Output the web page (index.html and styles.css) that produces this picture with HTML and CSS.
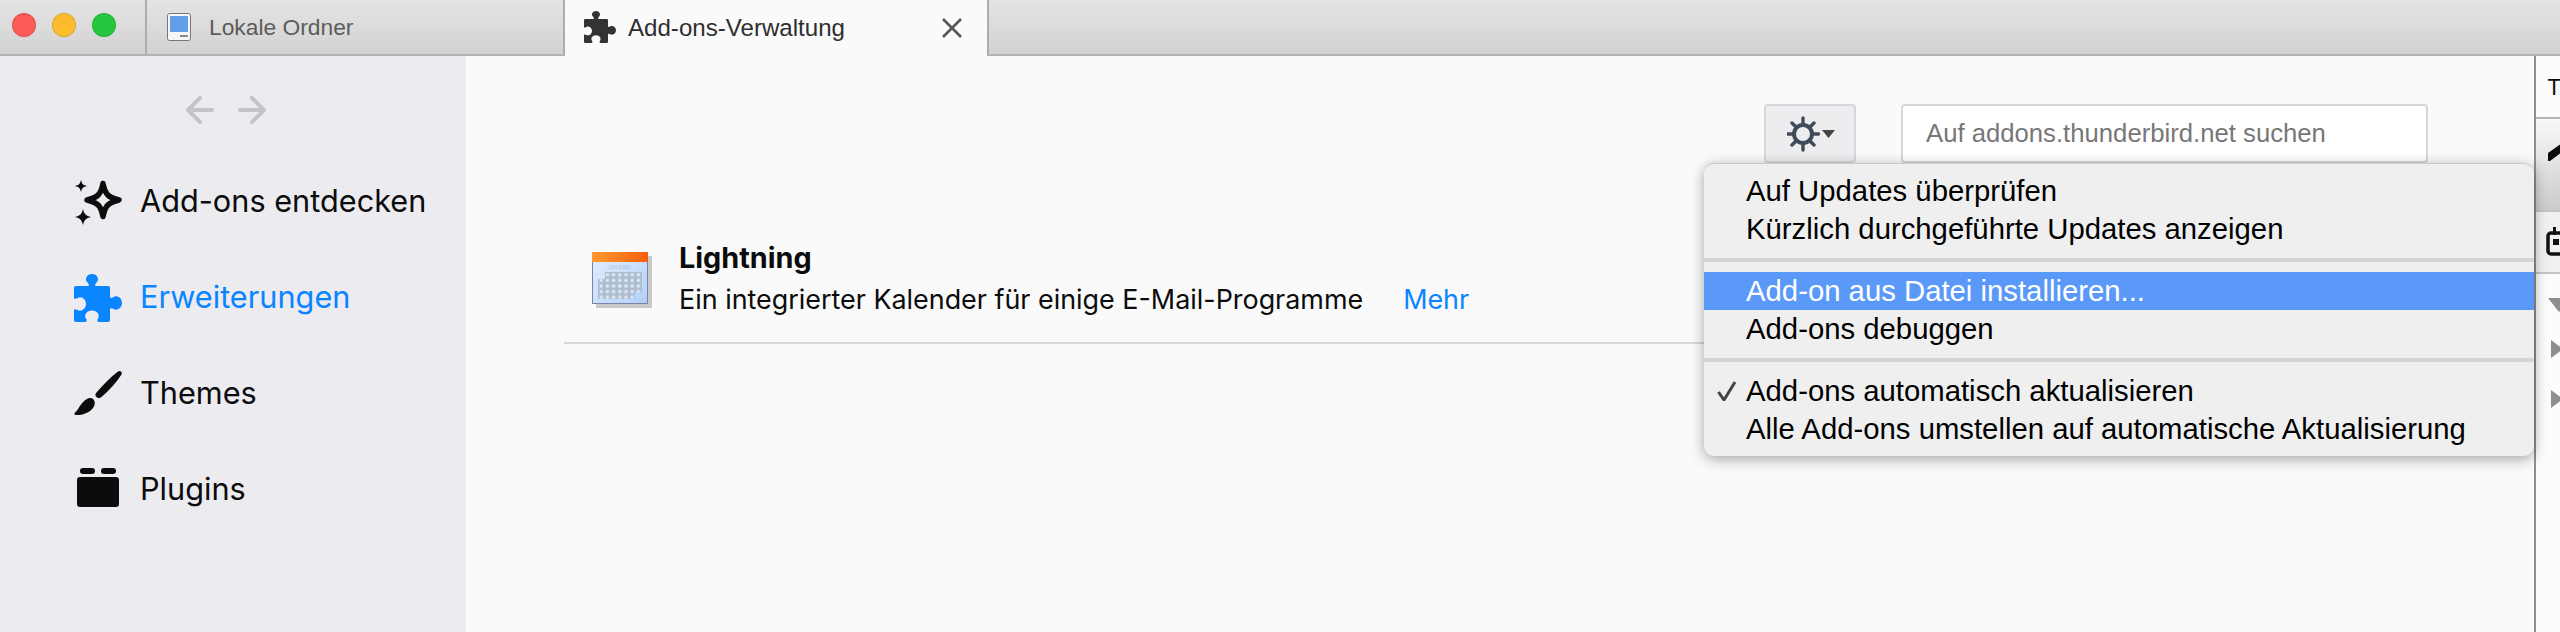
FILE: index.html
```html
<!DOCTYPE html>
<html lang="de">
<head>
    <meta charset="UTF-8">
    <link rel="stylesheet" href="styles.css">
    <title>Add-ons-Verwaltung</title>
</head>
<body>

<svg class="defs" width="0" height="0">
    <symbol id="puzzle" viewBox="0 0 48 48">
        <path d="M2 12 H13.5 C15.5 12 15 10 13.5 8.5 C10 5 13 0 18 0 C23 0 26 5 22.5 8.5 C21 10 20.5 12 22.5 12 H34 a2 2 0 0 1 2 2 V22.5 C36 24.5 38 24 39.5 23 C43 21 48 24 48 29 C48 34 43 37 39.5 35 C38 34 36 33.5 36 35.5 V46 a2 2 0 0 1 -2 2 H25 C23 48 23 46 24 44.5 C26.5 41 23 36.5 18 36.5 C13 36.5 9.5 41 12 44.5 C13 46 13 48 11 48 H2 a2 2 0 0 1 -2 -2 V36.5 C0 34.5 2 35 3.5 36 C7 38 12 35 12 30 C12 25 7 22 3.5 24 C2 25 0 25.5 0 23.5 V14 a2 2 0 0 1 2 -2 Z"/>
    </symbol>
</svg>

<div class="tabbar">
    <div class="traffic">
        <span class="dot red"></span>
        <span class="dot yellow"></span>
        <span class="dot green"></span>
    </div>
    <div class="tab">
        <svg class="tabIcon" width="24" height="28" viewBox="0 0 24 28">
            <rect x="0.5" y="0.5" width="23" height="27" rx="2" fill="#f6f6f6" stroke="#777"/>
            <rect x="3" y="3" width="18" height="16" fill="#649ee9"/>
            <rect x="13" y="22" width="8" height="2" fill="#888"/>
        </svg>
        <span>Lokale Ordner</span>
    </div>
    <div class="tab active">
        <svg class="tabPuzzle" width="32" height="32"><use href="#puzzle"/></svg>
        <span class="tabTitle">Add-ons-Verwaltung</span>
        <svg class="tabClose" width="20" height="20" viewBox="0 0 20 20">
            <path d="M1 1 L19 19 M19 1 L1 19" stroke="#555" stroke-width="2.6" fill="none"/>
        </svg>
    </div>
    <div class="tabFill"></div>
</div>

<div class="content">
    <div class="sidebar">
        <div class="history">
            <svg width="28" height="28" viewBox="0 0 28 28">
                <path d="M14 2 L2 14 L14 26 M2 14 H26" stroke="#c4c4c6" stroke-width="4" stroke-linecap="round" stroke-linejoin="round" fill="none"/>
            </svg>
            <svg width="28" height="28" viewBox="0 0 28 28">
                <path d="M14 2 L26 14 L14 26 M26 14 H2" stroke="#c4c4c6" stroke-width="4" stroke-linecap="round" stroke-linejoin="round" fill="none"/>
            </svg>
        </div>
        <div class="navItem">
            <svg width="48" height="48" viewBox="0 0 48 48">
                <path d="M29 5.5 C31 16 34 19.5 45 22 C34 24.5 31 28 29 38.5 C27 28 24 24.5 13 22 C24 19.5 27 16 29 5.5 Z" stroke="#0c0c0d" stroke-width="5.5" stroke-linejoin="round" fill="none"/>
                <path d="M7 2 C8 6 9 7 13 8 C9 9 8 10 7 14 C6 10 5 9 1 8 C5 7 6 6 7 2 Z" fill="#0c0c0d"/>
                <path d="M9 31 C10.2 36 12 37.8 17 39 C12 40.2 10.2 42 9 47 C7.8 42 6 40.2 1 39 C6 37.8 7.8 36 9 31 Z" fill="#0c0c0d"/>
            </svg>
            <span>Add-ons entdecken</span>
        </div>
        <div class="navItem selected">
            <svg width="48" height="48"><use href="#puzzle"/></svg>
            <span>Erweiterungen</span>
        </div>
        <div class="navItem">
            <svg width="48" height="48" viewBox="0 0 48 48">
                <path d="M44 1.5 C46.5 0 48.5 2 47.5 4.5 C42 13 35 20.5 27.5 27 C25.5 28.5 24 28.5 22.5 27 C21 25.5 21 24 22.5 22.5 C29 15 36 7.5 44 1.5 Z" fill="#0c0c0d"/>
                <path d="M13 29 C17 26.5 22 29.5 20.5 35 C18.5 42 9 45.5 1.5 45 C-0.5 44.5 0.5 43 1.5 42 C5 39 7 32 13 29 Z" fill="#0c0c0d"/>
            </svg>
            <span>Themes</span>
        </div>
        <div class="navItem">
            <svg width="48" height="48" viewBox="0 0 48 48">
                <rect x="6" y="2" width="15" height="6" rx="3" fill="#0c0c0d"/>
                <rect x="27" y="2" width="15" height="6" rx="3" fill="#0c0c0d"/>
                <rect x="3" y="11" width="42" height="30" rx="3" fill="#0c0c0d"/>
            </svg>
            <span>Plugins</span>
        </div>
    </div>

    <div class="main">
        <div class="toolbar">
            <div class="gearButton">
                <svg width="48" height="36" viewBox="0 0 48 36">
                    <g stroke="#3f4b59" fill="none" stroke-linecap="round">
                        <circle cx="16" cy="18" r="9" stroke-width="4"/>
                        <path d="M16 2 V8 M16 28 V34 M0.5 18 H6 M26 18 H31.5 M5 7 L9 11 M23 25 L27 29 M27 7 L23 11 M9 25 L5 29" stroke-width="3.4"/>
                    </g>
                    <path d="M35 14 H48 L41.5 22 Z" fill="#444"/>
                </svg>
            </div>
            <input class="search" type="text" placeholder="Auf addons.thunderbird.net suchen">
        </div>

        <div class="addon">
            <svg class="addonIcon" width="60" height="56" viewBox="0 0 60 56">
                <defs>
                    <linearGradient id="calBody" x1="0" y1="0" x2="1" y2="1">
                        <stop offset="0" stop-color="#e4efff"/>
                        <stop offset="1" stop-color="#b0d0f8"/>
                    </linearGradient>
                    <linearGradient id="calHead" x1="0" y1="0" x2="1" y2="0">
                        <stop offset="0" stop-color="#ff9a30"/>
                        <stop offset="1" stop-color="#f4600c"/>
                    </linearGradient>
                    <pattern id="calGrid" width="6.2" height="5.6" patternUnits="userSpaceOnUse" x="6" y="20">
                        <rect width="6.2" height="5.6" fill="#adbccf"/>
                        <rect x="1.6" y="1.3" width="3.2" height="3" fill="#dfe9f6"/>
                    </pattern>
                </defs>
                <rect x="4" y="4" width="56" height="52" fill="#c9c9c9"/>
                <rect x="0.5" y="0.5" width="55" height="51" fill="url(#calBody)" stroke="#7d82a8"/>
                <rect x="0" y="0" width="56" height="10" fill="url(#calHead)"/>
                <text class="calText" x="27" y="17">JAN 2008</text>
                <path d="M13 20 H50 V40 H43 V47 H6 V27 H13 Z" fill="url(#calGrid)"/>
            </svg>
            <div class="addonInfo">
                <div class="addonName">Lightning</div>
                <div class="addonDesc">Ein integrierter Kalender für einige E-Mail-Programme<a class="more">Mehr</a></div>
            </div>
        </div>

        <div class="menu">
            <div class="menuItem"><span class="check"></span>Auf Updates überprüfen</div>
            <div class="menuItem"><span class="check"></span>Kürzlich durchgeführte Updates anzeigen</div>
            <div class="menuSep"></div>
            <div class="menuItem hover"><span class="check"></span>Add-on aus Datei installieren...</div>
            <div class="menuItem"><span class="check"></span>Add-ons debuggen</div>
            <div class="menuSep"></div>
            <div class="menuItem">
                <span class="check">
                    <svg width="20" height="20" viewBox="0 0 20 20">
                        <path d="M1.5 11 L7 19 L18 1" stroke="#444" stroke-width="3" fill="none"/>
                    </svg>
                </span>Add-ons automatisch aktualisieren</div>
            <div class="menuItem"><span class="check"></span>Alle Add-ons umstellen auf automatische Aktualisierung</div>
        </div>
    </div>

    <div class="panel">
        <div class="panelTitle">Termine</div>
        <div class="panelTools">
            <svg width="26" height="20" viewBox="0 0 26 20">
                <path d="M0 10 L14 0 L14 9 L2 18 L0 18 Z" fill="#0c0c0d"/>
            </svg>
        </div>
        <div class="panelCal">
            <svg width="26" height="30" viewBox="0 0 26 30">
                <rect x="2" y="7" width="22" height="21" rx="3" fill="none" stroke="#111" stroke-width="3.5"/>
                <rect x="7" y="1" width="3" height="8" fill="#111"/>
                <rect x="7" y="13" width="6" height="6" fill="#111"/>
            </svg>
        </div>
        <div class="panelList">
            <span class="twisty down"></span>
            <span class="twisty"></span>
            <span class="twisty"></span>
        </div>
    </div>
</div>

</body>
</html>
```

FILE: styles.css
```css
* {
    box-sizing: border-box;
}

body {
    margin: 0;
    height: 632px;
    overflow: hidden;
    font-family: "Inter", sans-serif;
    background-color: #fafafa;
    color: #0c0c0d;
}

.defs {
    display: block;
    height: 0;
}

/* title bar */
.tabbar {
    display: flex;
    height: 56px;
    font-family: "Liberation Sans", sans-serif;
    font-size: 22.8px;
}

.traffic {
    display: flex;
    gap: 16px;
    width: 145px;
    padding: 13px 0 0 12px;
    background: linear-gradient(#e4e4e4, #d2d2d2);
    border-bottom: 2px solid #b4b4b4;
}

.dot {
    width: 24px;
    height: 24px;
    border-radius: 50%;
    border: 1px solid rgba(0, 0, 0, 0.12);
}

.red {
    background-color: #fc5b57;
}

.yellow {
    background-color: #fdbc2c;
}

.green {
    background-color: #26c73f;
}

.tab {
    display: flex;
    align-items: center;
    width: 420px;
    height: 56px;
    padding-left: 20px;
    background: linear-gradient(#e4e4e4, #d2d2d2);
    border-left: 2px solid #adadad;
    border-right: 2px solid #adadad;
    border-bottom: 2px solid #b4b4b4;
    color: #5c5c5c;
}

.tabIcon {
    margin-right: 18px;
}

.tab.active {
    width: 422px;
    padding-left: 19px;
    background: #fafafa;
    border: none;
    color: #2e2e30;
}

.tabPuzzle {
    fill: #333;
    margin: -2px 12px 0 0;
}

.tabTitle {
    width: 314px;
    font-size: 24.1px;
}

.tabFill {
    flex: 1;
    background: linear-gradient(#e4e4e4, #d2d2d2);
    border-left: 2px solid #adadad;
    border-bottom: 2px solid #b4b4b4;
}

.content {
    display: flex;
    height: 576px;
}

/* categories */
.sidebar {
    width: 466px;
    padding-top: 40px;
    background-color: #ebebf0;
}

.history {
    display: flex;
    gap: 24px;
    padding-left: 186px;
    margin-bottom: 30px;
}

.navItem {
    display: flex;
    align-items: center;
    gap: 18px;
    height: 96px;
    padding-left: 74px;
    font-size: 30.7px;
}

.navItem span {
    margin-top: -3px;
}

.selected {
    color: #0a84ff;
    fill: #0a84ff;
}

/* add-on list */
.main {
    position: relative;
    flex: 1;
    padding: 48px 106px 0 98px;
}

.toolbar {
    display: flex;
    justify-content: flex-end;
    gap: 45px;
}

.gearButton {
    display: flex;
    align-items: center;
    justify-content: center;
    width: 92px;
    height: 59px;
    padding-left: 2px;
    background-color: #ededf0;
    border: 2px solid #d7d7db;
    border-radius: 4px;
}

.search {
    width: 527px;
    height: 59px;
    padding: 0 23px;
    font-family: "Liberation Sans", sans-serif;
    font-size: 25.7px;
    background-color: #fff;
    border: 2px solid #d7d7db;
    border-radius: 4px;
}

.search::placeholder {
    color: #777;
    opacity: 1;
}

.addon {
    display: flex;
    align-items: flex-start;
    gap: 27px;
    height: 125px;
    margin-top: 56px;
    padding: 19px 0 0 28px;
    border-bottom: 2px solid #d7d7db;
}

.addonIcon {
    margin-top: 14px;
}

.addonName {
    font-size: 28.8px;
    font-weight: 700;
    line-height: 40px;
}

.addonDesc {
    font-size: 26.9px;
    line-height: 42px;
}

.more {
    margin-left: 40px;
    color: #0a84ff;
}

.calText {
    font-size: 5px;
    fill: #b4c0d0;
    text-anchor: middle;
    font-family: "Liberation Sans", sans-serif;
}

/* gear menu */
.menu {
    position: absolute;
    top: 107px;
    right: 0;
    width: 830px;
    height: 293px;
    padding-top: 8px;
    font-family: "Liberation Sans", sans-serif;
    font-size: 29.3px;
    background-color: #efefef;
    border-top: 1px solid #c9c9c9;
    border-radius: 10px;
    box-shadow: 0 3px 14px rgba(0, 0, 0, 0.35);
}

.menuItem {
    display: flex;
    align-items: center;
    height: 38px;
    padding-left: 13px;
    color: #000;
}

.check {
    display: flex;
    width: 29px;
}

.hover {
    background-color: #5b99f8;
    color: #fff;
}

.menuSep {
    height: 4px;
    margin: 10px 0;
    background-color: #d4d4d4;
}

/* today pane */
.panel {
    width: 26px;
    border-left: 2px solid #8f8f8f;
    overflow: hidden;
    background-color: #fcfcfc;
}

.panelTitle {
    height: 63px;
    padding: 18px 0 0 11px;
    font-size: 22px;
    line-height: 26px;
    border-bottom: 2px solid #b4b4b4;
}

.panelTools {
    height: 93px;
    padding: 24px 0 0 12px;
    background: linear-gradient(#f8f8f8, #cbcbcb);
    border-bottom: 2px solid #c4c4c4;
}

.panelCal {
    height: 62px;
    padding: 14px 0 0 10px;
    background-color: #f0f0f0;
    border-bottom: 2px solid #c4c4c4;
}

.panelList {
    display: flex;
    flex-direction: column;
    gap: 32px;
    padding: 24px 0 0 15px;
}

.twisty {
    width: 0;
    height: 0;
    border-top: 9px solid transparent;
    border-bottom: 9px solid transparent;
    border-left: 12px solid #8e8e8e;
}

.twisty.down {
    margin: 0 0 -4px -3px;
    border-top: 14px solid #8e8e8e;
    border-left: 11px solid transparent;
    border-right: 11px solid transparent;
    border-bottom: none;
}
```
